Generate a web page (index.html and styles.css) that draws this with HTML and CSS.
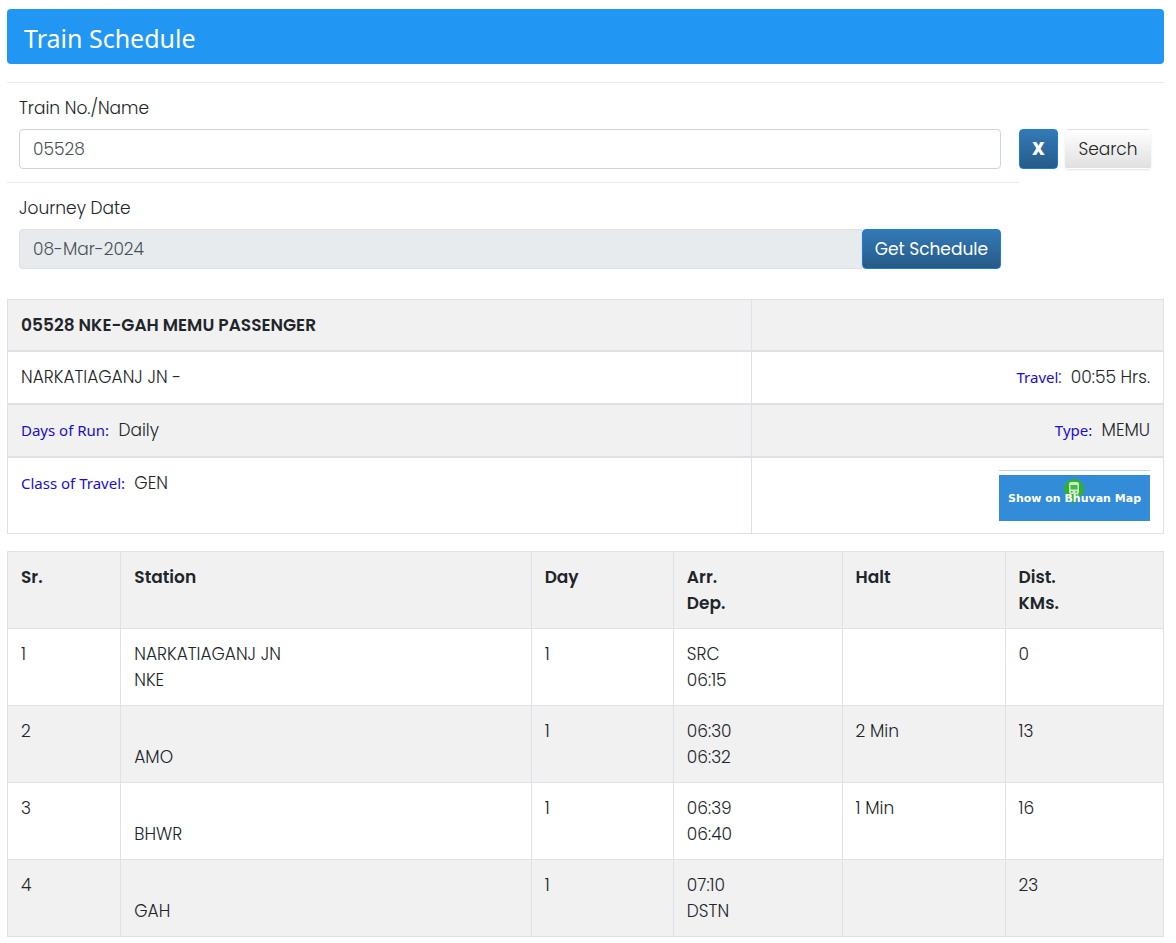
FILE: index.html
```html
<!DOCTYPE html>
<html lang="en">
<head>
<meta charset="utf-8">
<meta name="viewport" content="width=device-width, initial-scale=1">
<title>Train Schedule</title>
<link rel="stylesheet" href="styles.css">
</head>
<body>
<main class="page">
  <h1 class="banner">Train Schedule</h1>

  <form class="search">
    <div class="search-row">
      <div class="field">
        <label class="label" for="train">Train No./Name</label>
        <input class="control" id="train" type="text" value="05528">
      </div>
      <div class="actions">
        <button class="btn btn-primary btn-clear" type="button">X</button>
        <button class="btn btn-light" type="button">Search</button>
      </div>
    </div>
    <div class="search-row">
      <div class="field field-date">
        <label class="label" for="date">Journey Date</label>
        <div class="group">
          <input class="control control-readonly" id="date" type="text" value="08-Mar-2024" readonly>
          <button class="btn btn-primary" type="button">Get Schedule</button>
        </div>
      </div>
    </div>
  </form>

  <table class="table summary">
    <colgroup><col class="c-main"><col></colgroup>
    <thead>
      <tr><th>05528 NKE-GAH MEMU PASSENGER</th><td></td></tr>
    </thead>
    <tbody>
      <tr><td>NARKATIAGANJ JN -</td><td class="right"><span class="key">Travel</span>:&nbsp; 00:55 Hrs.</td></tr>
      <tr class="shade"><td><span class="key">Days of Run:</span>&nbsp; Daily</td><td class="right"><span class="key">Type:</span>&nbsp; MEMU</td></tr>
      <tr class="last">
        <td><span class="key">Class of Travel:</span>&nbsp; GEN</td>
        <td class="right">
          <a class="map" href="#map">
            <span class="map-box">
              <svg class="map-pin" viewBox="0 0 22 28" aria-hidden="true">
                <path d="M11 1a10 10 0 0 1 10 10c0 5-4 8-7 9.500L11 27l-3-6.500C5 19 1 16 1 11A10 10 0 0 1 11 1z" fill="#2fb32f"/>
                <path d="M8 4h6a2 2 0 0 1 2 2v8a2 2 0 0 1-2 2H8a2 2 0 0 1-2-2V6a2 2 0 0 1 2-2z" fill="#c9ecc9"/>
                <path d="M7.500 7h7v4.500h-7z" fill="#49b749"/>
                <path d="M8 13h1.500v1.500H8zM12.500 13H14v1.500h-1.500z" fill="#2fb32f"/>
                <path d="M8 16l-2 3M14 16l2 3" stroke="#c9ecc9" stroke-width="1"/>
              </svg>
              <span class="map-text">Show on Bhuvan Map</span>
            </span>
          </a>
        </td>
      </tr>
    </tbody>
  </table>

  <table class="table stops">
    <colgroup><col class="c-sr"><col class="c-station"><col class="c-day"><col class="c-time"><col class="c-halt"><col></colgroup>
    <thead>
      <tr><th>Sr.</th><th>Station</th><th>Day</th><th>Arr.<br>Dep.</th><th>Halt</th><th>Dist.<br>KMs.</th></tr>
    </thead>
    <tbody>
      <tr><td>1</td><td>NARKATIAGANJ JN<br>NKE</td><td>1</td><td>SRC<br>06:15</td><td></td><td>0</td></tr>
      <tr class="shade"><td>2</td><td><br>AMO</td><td>1</td><td>06:30<br>06:32</td><td>2 Min</td><td>13</td></tr>
      <tr><td>3</td><td><br>BHWR</td><td>1</td><td>06:39<br>06:40</td><td>1 Min</td><td>16</td></tr>
      <tr class="shade"><td>4</td><td><br>GAH</td><td>1</td><td>07:10<br>DSTN</td><td></td><td>23</td></tr>
    </tbody>
  </table>
</main>
</body>
</html>
```
FILE: styles.css
```css
* { box-sizing: border-box; }

body {
  margin: 0;
  background: #fff;
  color: #212529;
  font-family: Poppins, Inter, "Liberation Sans", sans-serif;
  font-size: 17px;
  font-weight: 300;
  line-height: 26px;
}

.page { padding: 9px 12px 8px 7px; }

.banner {
  margin: 0 0 18px;
  padding: 12px 17px 8px;
  border-radius: 4px;
  background: #2196f3;
  color: #fff;
  font-family: "Noto Sans", sans-serif;
  font-size: 25px;
  font-weight: 400;
  line-height: 35px;
}

.search { border-top: 1px solid #e9eaeb; }
.search-row { display: flex; align-items: flex-start; }

.field {
  flex: 1;
  padding: 12px 18px 13px 12px;
  border-bottom: 1px solid #e9eaeb;
}
.field-date {
  margin-right: 145px;
  padding-bottom: 30px;
  border-bottom: 0;
}

.label { display: block; margin-bottom: 8px; }

.control {
  display: block;
  width: 100%;
  height: 40px;
  padding: 0 13px;
  border: 1px solid #ced4da;
  border-radius: 4px;
  background: #fff;
  color: #495057;
  font: inherit;
}
.control-readonly {
  flex: 1;
  min-width: 0;
  border-color: #dde1e5;
  border-radius: 4px 0 0 4px;
  background: #e7ebee;
}
.group { display: flex; }

.actions {
  display: flex;
  gap: 7px;
  width: 145px;
  padding-top: 46px;
}

.btn {
  height: 40px;
  padding: 0 12px;
  border: 1px solid transparent;
  border-radius: 4px;
  font: inherit;
  white-space: nowrap;
}
.btn-primary {
  border-color: #1c7be0;
  background: linear-gradient(#337ab7, #265a88);
  color: #fff;
  font-weight: 400;
}
.btn-clear {
  width: 39px;
  font-family: "Open Sans", sans-serif;
  font-weight: 800;
}
.btn-light {
  width: 86px;
  background: linear-gradient(#fff, #e0e0e0);
  color: #222;
  box-shadow: 0 1px 2px rgba(0, 0, 0, 0.12);
}

.table {
  width: 100%;
  border-collapse: collapse;
  table-layout: fixed;
}
.table th,
.table td {
  padding: 12px 13px;
  border: 1px solid #dee2e6;
  text-align: left;
  vertical-align: top;
}
.table th { color: #212529; font-weight: 600; }
.table thead,
.shade { background: #f1f1f2; }
.table .right { text-align: right; }

.summary { margin-bottom: 17px; }
.summary th,
.summary td { border-bottom-width: 2px; }
.summary tbody td { padding-bottom: 13px; }
.summary .last td { border-bottom-width: 1px; }
.summary .last .right { padding-bottom: 12px; }
.c-main { width: 64.4%; }

.c-sr { width: 9.8%; }
.c-station { width: 35.5%; }
.c-day { width: 12.3%; }
.c-time { width: 14.6%; }
.c-halt { width: 14.1%; }

.key {
  color: #1a0dcc;
  font-family: "Noto Sans", sans-serif;
  font-size: 15px;
  font-weight: 400;
}

.map {
  display: inline-block;
  width: 151px;
  padding-top: 4px;
  border-top: 1px solid #c5d5e8;
  color: #fff;
  text-decoration: none;
  vertical-align: top;
}
.map-box {
  position: relative;
  display: flex;
  align-items: center;
  justify-content: center;
  height: 46px;
  padding-top: 2px;
  background: #328cd8;
}
.map-pin {
  position: absolute;
  top: 3px;
  left: 64px;
  width: 22px;
  height: 28px;
}
.map-text {
  position: relative;
  font-family: "DejaVu Sans", sans-serif;
  font-size: 11px;
  font-weight: 700;
  white-space: nowrap;
}
```
